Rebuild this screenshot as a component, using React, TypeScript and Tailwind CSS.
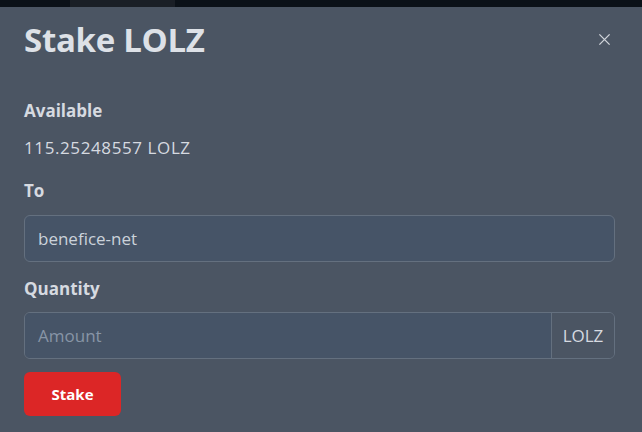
import React from "react";

export default function App() {
  const font = { fontFamily: '"Open Sans", "Noto Sans", sans-serif' };
  return (
    <div className="w-[642px] h-[432px] bg-[#4b5563] overflow-hidden flex flex-col" style={font}>
      <div className="h-[7px] w-full flex bg-[#0b1118]">
        <div className="w-[70px]" />
        <div className="w-[105px] bg-[#1a1f26]" />
      </div>
      <div className="flex-1 flex flex-col pl-6 pr-[27px]">
        <div className="flex items-center justify-between h-[64px] pt-[1px]">
          <h1 className="text-[33px] font-bold text-[#dde1e7] tracking-[-0.3px]">Stake LOLZ</h1>
          <button className="text-[#d1d5db] mr-[4px]">
            <svg width="13" height="13" viewBox="0 0 14 14" fill="none" stroke="currentColor" strokeWidth="1.4">
              <path d="M1.5 1.5 L12.5 12.5 M12.5 1.5 L1.5 12.5" />
            </svg>
          </button>
        </div>
        <div className="mt-[28px] text-[17px] font-bold text-[#d6dae0] leading-[24px]">Available</div>
        <div className="mt-[13px] text-[17px] text-[#d6dae0] leading-[24px] tracking-[0.6px]">115.25248557 LOLZ</div>
        <div className="mt-[19px] text-[17px] font-bold text-[#d6dae0] leading-[24px]">To</div>
        <div className="mt-[12px] h-[47px] rounded-[6px] border border-[#64707f] bg-[#465467] flex items-center px-[13px] text-[17px] text-[#cbd2da]">
          benefice-net
        </div>
        <div className="mt-[15px] text-[17px] font-bold text-[#d6dae0] leading-[24px]">Quantity</div>
        <div className="mt-[11px] h-[47px] rounded-[6px] border border-[#64707f] flex overflow-hidden">
          <div className="flex-1 bg-[#465467] flex items-center px-[13px] text-[17px] text-[#8895a6]">Amount</div>
          <div className="w-[63px] border-l border-[#64707f] bg-[#4b5563] flex items-center justify-center text-[17px] text-[#d6dae0]">LOLZ</div>
        </div>
        <button className="mt-[13px] w-[97px] h-[44px] rounded-[6px] bg-[#dc2626] text-white text-[15px] font-bold">
          Stake
        </button>
      </div>
    </div>
  );
}
